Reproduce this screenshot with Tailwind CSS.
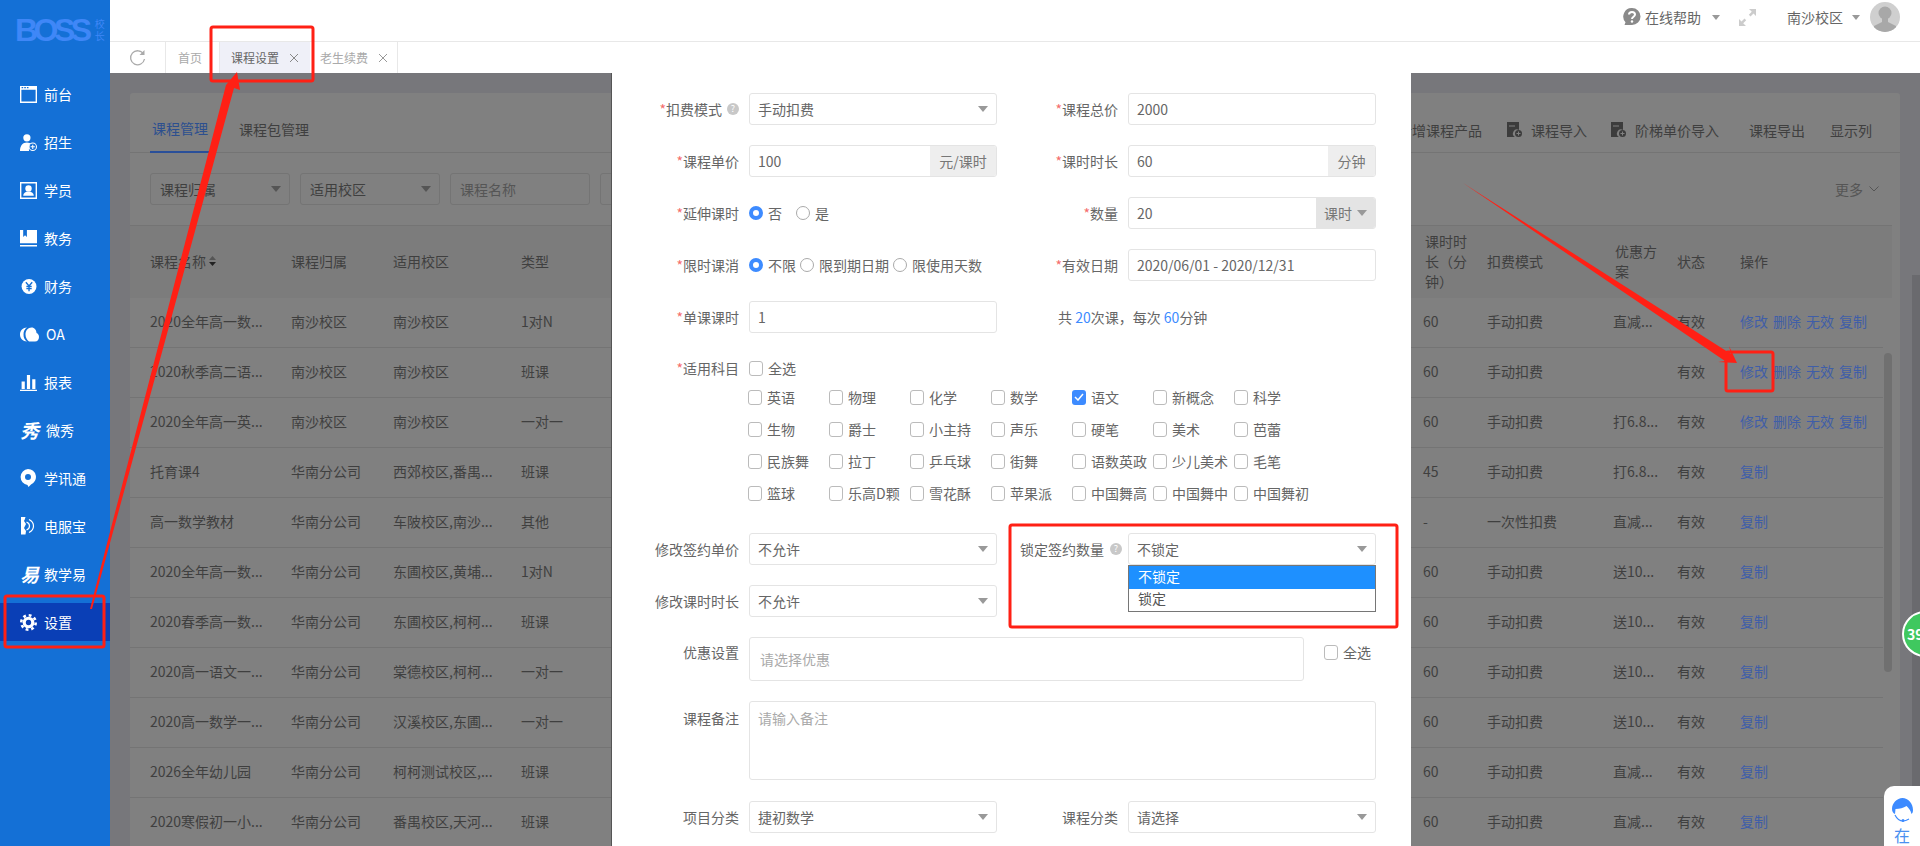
<!DOCTYPE html>
<html lang="zh-CN">
<head>
<meta charset="UTF-8">
<title>课程设置</title>
<script src="https://cdn.jsdelivr.net/npm/@tailwindcss/browser@4"></script>
</head>
<body class="relative flex h-[846px] w-[1920px] overflow-hidden bg-white text-[14px] leading-[20px] text-[#666] font-['Noto_Sans_CJK_SC',sans-serif]">

<!-- sidebar -->
<aside class="w-[110px] shrink-0 bg-[#1470d6] text-white">
  <div class="flex h-[75px] items-start pl-[15px] pt-[15px]">
    <span class="text-[32px] leading-[30px] font-bold tracking-[-4.500px] text-[#3f87f7] font-['Liberation_Sans',sans-serif]">BOSS</span>
    <span class="ml-[7px] mt-[3px] w-[10px] text-[10px] leading-[12px] text-[#3f87f7]">校长</span>
  </div>
  <nav class="flex flex-col gap-[10px]">
    <a class="flex h-[38px] items-center pl-[20px]"><span class="w-[24px]"><svg class="h-[17px] w-[17px]" viewBox="0 0 16 16"><path fill="#fff" fill-rule="evenodd" d="M0 0h16v16H0zM1.300 3.500v11.200h13.400V3.500z"/><path fill="#1470d6" d="M1.500 1h1.500v1.200H1.500zM4 1h1.500v1.200H4zM6.500 1H8v1.200H6.500z"/></svg></span>前台</a>
    <a class="flex h-[38px] items-center pl-[20px]"><span class="w-[24px]"><svg class="h-[17px] w-[17px]" viewBox="0 0 16 16"><circle cx="6.500" cy="3.600" r="3.400" fill="#fff"/><path fill="#fff" d="M0 16c0-5 2.500-8 6.500-8 2 0 3.500.8 4.500 2-2 1-3 3-2.500 6z"/><circle cx="12" cy="12" r="3.500" fill="#1470d6" stroke="#fff"/><path stroke="#fff" d="M12 10v4M10 12h4"/></svg></span>招生</a>
    <a class="flex h-[38px] items-center pl-[20px]"><span class="w-[24px]"><svg class="h-[17px] w-[17px]" viewBox="0 0 16 16"><path fill="#fff" fill-rule="evenodd" d="M0 0h16v16H0zM1.300 1.300v13.400h13.400V1.300z"/><circle cx="8" cy="6" r="3" fill="#fff"/><path fill="#fff" d="M3 13c0-2.500 2-4 5-4s5 1.500 5 4z"/></svg></span>学员</a>
    <a class="flex h-[38px] items-center pl-[20px]"><span class="w-[24px]"><svg class="h-[17px] w-[17px]" viewBox="0 0 16 16"><path fill="#fff" d="M0 0h16v12.500H0zM0 14h16v1.600H0z"/><path fill="#1470d6" d="M3 0h3.500v6.500L4.750 5 3 6.500z"/></svg></span>教务</a>
    <a class="flex h-[38px] items-center pl-[20px]"><span class="w-[24px]"><svg class="h-[17px] w-[17px]" viewBox="0 0 16 16"><circle cx="8.500" cy="8" r="7" fill="#fff"/><path fill="none" stroke="#1470d6" stroke-width="1.300" d="M5.500 4l3 3.500 3-3.500M8.500 7.500V12.500M6 8h5M6 10h5"/></svg></span>财务</a>
    <a class="flex h-[38px] items-center pl-[20px]"><span class="w-[26px]"><svg class="h-[15px] w-[19px]" viewBox="0 0 19 15"><path fill="#fff" d="M7 .5C3 .5 0 3.500 0 7.500s3 7 7 7c-2.500-1.500-3.500-4-3.500-7S4.500 2 7 .5z"/><path fill="#fff" d="M11.500 .5c3 0 5 2.500 5 5.500 1.500.5 2.500 2 2.500 4 0 2.500-1.500 4.500-4 4.500H9C7 13 5.500 10.500 5.500 7.500 5.500 3.500 8 .5 11.500 .5z"/></svg></span>OA</a>
    <a class="flex h-[38px] items-center pl-[20px]"><span class="w-[24px]"><svg class="h-[17px] w-[17px]" viewBox="0 0 16 16"><path fill="#fff" d="M1.500 7h3v7h-3zM6.500 1h3v13h-3zM11.500 5h3v9h-3zM0 14.800h16V16H0z"/></svg></span>报表</a>
    <a class="flex h-[38px] items-center pl-[20px]"><span class="w-[26px] text-[19px] leading-[20px] font-bold italic">秀</span>微秀</a>
    <a class="flex h-[38px] items-center pl-[20px]"><span class="w-[24px]"><svg class="h-[18px] w-[16px]" viewBox="0 0 16 18"><path fill="#fff" fill-rule="evenodd" d="M8 0a8 8 0 0 1 3 15.400L8.500 18l-1-2.100A8 8 0 0 1 8 0zm0 5a3 3 0 1 0 0 6 3 3 0 0 0 0-6z"/></svg></span>学讯通</a>
    <a class="flex h-[38px] items-center pl-[20px]"><span class="w-[24px]"><svg class="h-[18px] w-[16px]" viewBox="0 0 16 18"><path fill="#fff" d="M1 0h4.500C5 2 4.500 3 4 4l2 3-2 4 2 3-.5 3.500H1z"/><path fill="none" stroke="#fff" stroke-width="1.200" d="M6.500 5c2 .8 3 2.200 3 4s-1 3.200-3 4M9 2.500c3 1.500 4.500 3.800 4.500 6.500s-1.500 5-4.500 6.500"/></svg></span>电服宝</a>
    <a class="flex h-[38px] items-center pl-[20px]"><span class="w-[24px] text-[19px] leading-[20px] font-bold italic">易</span>教学易</a>
    <a class="flex h-[38px] items-center bg-[#0a3fb6] pl-[20px]"><span class="w-[24px]"><svg class="h-[17px] w-[17px]" viewBox="0 0 16 16"><circle cx="8" cy="8" r="5.500" fill="#fff"/><circle cx="8" cy="8" r="6.800" fill="none" stroke="#fff" stroke-width="2.400" stroke-dasharray="2.670 2.670"/><circle cx="8" cy="8" r="2.500" fill="#0a3fb6"/></svg></span>设置</a>
  </nav>
</aside>

<div class="flex w-[1810px] flex-col">
  <!-- top bar -->
  <header class="flex h-[42px] shrink-0 items-start justify-end border-b border-[#e8e8e8] pr-[20px] pt-[2px]">
    <div class="flex h-[30px] items-center">
      <svg class="h-[18px] w-[18px]" viewBox="0 0 18 18"><path fill="#8a8a8a" d="M9 0a8.500 8.500 0 0 1 0 17H1.500l1-2.800A8.500 8.500 0 0 1 9 0z"/><path fill="none" stroke="#fff" stroke-width="2" d="M6 6.500C6 4.800 7.300 4 9 4s3 1 3 2.500c0 2.200-3 2.200-3 4.500"/><circle cx="9" cy="13.500" r="1.200" fill="#fff"/></svg>
      <span class="ml-[4px]">在线帮助</span>
      <span class="ml-[11px] h-0 w-0 border-x-[4.500px] border-t-[5px] border-x-transparent border-t-[#999]"></span>
      <svg class="ml-[19px] h-[17px] w-[17px]" viewBox="0 0 17 17"><path fill="#ccc" d="M10 0h7v7l-2.500-2.500-3 3L9.800 5.800l3-3zM0 17v-7l2.500 2.500 3-3 1.700 1.700-3 3L7 17z"/></svg>
      <span class="ml-[31px]">南沙校区</span>
      <span class="ml-[9px] h-0 w-0 border-x-[4.500px] border-t-[5px] border-x-transparent border-t-[#999]"></span>
      <span class="ml-[10px] h-[30px] w-[30px] overflow-hidden rounded-full bg-[#cfcfcf]"><svg viewBox="0 0 30 30"><circle cx="15" cy="11" r="6.500" fill="#a8a8a8"/><path fill="#a8a8a8" d="M12 16h6v4l8 4v6H4v-6l8-4z"/></svg></span>
    </div>
  </header>

  <!-- tab strip -->
  <div class="flex h-[31px] shrink-0 items-stretch text-[12px] text-[#aaa]">
    <div class="flex w-[56px] items-center justify-end border-r border-[#e8e8e8] pr-[19px]">
      <svg class="h-[18px] w-[17px]" viewBox="0 0 17 18"><path fill="none" stroke="#aaa" stroke-width="1.300" d="M14.500 5A7 7 0 1 0 15.500 10"/><path fill="#aaa" d="M15.500 1v5h-5z"/></svg>
    </div>
    <div class="flex w-[54px] items-center justify-center border-r border-[#e8e8e8] pr-[5px]">首页</div>
    <div class="flex w-[90px] items-center bg-[#eff0f8] pl-[11px] text-[#666]">课程设置<svg class="ml-[11px] h-[8px] w-[8px]" viewBox="0 0 8 8"><path stroke="#888" d="M0 0l8 8M8 0L0 8"/></svg></div>
    <div class="flex w-[88px] items-center border-r border-[#e8e8e8] pl-[10px]">老生续费<svg class="ml-[11px] h-[8px] w-[8px]" viewBox="0 0 8 8"><path stroke="#999" d="M0 0l8 8M8 0L0 8"/></svg></div>
  </div>

  <!-- dimmed page with the dialog on top -->
  <main class="relative flex-1 overflow-hidden bg-[#77777b] text-[#3f3f3f]">
    <div class="ml-[20px] mt-[20px] w-[1770px] rounded-[3px] bg-[#808080]">
      <div class="flex h-[60px] items-center justify-between border-b border-[#747474] pl-[20px] pr-[28px]">
        <div class="flex h-[60px]">
          <span class="flex w-[60px] items-center justify-center border-b-2 border-[#2a4f99] pt-[12px] text-[#2c4f8f]">课程管理</span>
          <span class="ml-[29px] flex items-center pt-[12px]">课程包管理</span>
        </div>
        <div class="flex items-center pt-[14px]">
          <span>新增课程产品</span>
          <svg class="ml-[25px] h-[15px] w-[15px]" viewBox="0 0 15 15"><path fill="#3c3c3c" d="M0 0h12v8a4 4 0 0 0-4 7H0z"/><circle cx="11.500" cy="11.500" r="3.500" fill="#3c3c3c"/><path stroke="#808080" d="M2 4h6M9.500 11.500h4M11.500 9.500v4"/></svg>
          <span class="ml-[9px]">课程导入</span>
          <svg class="ml-[24px] h-[15px] w-[15px]" viewBox="0 0 15 15"><path fill="#3c3c3c" d="M0 0h12v8a4 4 0 0 0-4 7H0z"/><circle cx="11.500" cy="11.500" r="3.500" fill="#3c3c3c"/><path stroke="#808080" d="M2 4h6M9.500 11.500h4M11.500 9.500v4"/></svg>
          <span class="ml-[9px]">阶梯单价导入</span>
          <span class="ml-[30px]">课程导出</span>
          <span class="ml-[25px]">显示列</span>
        </div>
      </div>
      <div class="flex h-[72px] items-center justify-between pl-[20px] pr-[21px] pb-[1px]">
        <div class="flex gap-[10px]">
          <div class="flex h-[32px] w-[140px] items-center justify-between rounded-[3px] border border-[#747474] pl-[9px] pr-[8px]">课程归属<span class="h-0 w-0 border-x-[5px] border-t-[6px] border-x-transparent border-t-[#555]"></span></div>
          <div class="flex h-[32px] w-[140px] items-center justify-between rounded-[3px] border border-[#747474] pl-[9px] pr-[8px]">适用校区<span class="h-0 w-0 border-x-[5px] border-t-[6px] border-x-transparent border-t-[#555]"></span></div>
          <div class="flex h-[32px] w-[140px] items-center rounded-[3px] border border-[#747474] pl-[9px] text-[#555]">课程名称</div>
          <div class="h-[32px] w-[140px] rounded-[3px] border border-[#747474]"></div>
        </div>
        <span class="flex items-center gap-[6px] text-[#555]">更多<svg class="h-[6px] w-[10px]" viewBox="0 0 10 6"><path fill="none" stroke="#555" d="M.5.500L5 5 9.500.500"/></svg></span>
      </div>
      <!-- table -->
      <div class="w-[1762px] border-t border-[#747474] bg-[#7c7c7c]">
        <div class="grid h-[72px] w-[1753px] grid-cols-[141px_102px_128px_902px_64px_126px_64px_63px_143px] items-center pb-[2px] pl-[20px]">
          <span class="flex items-center gap-[3px]">课程名称<svg class="h-[10px] w-[7px]" viewBox="0 0 7 10"><path fill="#555" d="M3.500 0L7 4H0z"/><path fill="#222" d="M3.500 10L7 6H0z"/></svg></span>
          <span>课程归属</span><span>适用校区</span><span>类型</span>
          <span class="ml-[2px] w-[44px]">课时时长（分钟）</span><span>扣费模式</span><span class="ml-[2px] w-[44px]">优惠方案</span><span>状态</span><span>操作</span>
        </div>
      </div>
      <div id="rows" class="w-[1753px]"></div>
    </div>
    <!-- table scrollbar -->
    <div class="absolute left-[1774px] top-[280px] h-[319px] w-[8px] rounded-[4px] bg-[#707070]"></div>
    <!-- page scrollbar -->
    <div class="absolute bottom-0 right-0 top-[202px] w-[8px] bg-[#6a6a6e]"></div>

    <!-- dialog -->
    <section class="absolute bottom-0 left-[501px] top-0 w-[800px] border-l border-[#555] bg-white pt-[20px] text-[#666]">
      <div class="grid grid-cols-[137px_248px_131px_248px] gap-y-[20px]">
        <div class="flex h-[32px] items-center justify-end pr-[10px]"><b class="font-normal text-[#f56c6c]">*</b>扣费模式<span class="ml-[5px] flex h-[12px] w-[12px] items-center justify-center rounded-full bg-[#c8c8c8] text-[9px] leading-[12px] text-white">?</span></div>
        <div class="flex h-[32px] items-center justify-between rounded-[3px] border border-[#e4e4e4] pl-[8px] pr-[8px]">手动扣费<span class="h-0 w-0 border-x-[5px] border-t-[6px] border-x-transparent border-t-[#999]"></span></div>
        <div class="flex h-[32px] items-center justify-end pr-[10px]"><b class="font-normal text-[#f56c6c]">*</b>课程总价</div>
        <div class="flex h-[32px] items-center rounded-[3px] border border-[#e4e4e4] pl-[8px]">2000</div>

        <div class="flex h-[32px] items-center justify-end pr-[10px]"><b class="font-normal text-[#f56c6c]">*</b>课程单价</div>
        <div class="flex h-[32px] items-stretch overflow-hidden rounded-[3px] border border-[#e4e4e4]"><span class="flex flex-1 items-center pl-[8px]">100</span><span class="flex w-[66px] items-center justify-center bg-[#eeeeee] text-[#777]">元/课时</span></div>
        <div class="flex h-[32px] items-center justify-end pr-[10px]"><b class="font-normal text-[#f56c6c]">*</b>课时时长</div>
        <div class="flex h-[32px] items-stretch overflow-hidden rounded-[3px] border border-[#e4e4e4]"><span class="flex flex-1 items-center pl-[8px]">60</span><span class="flex w-[47px] items-center justify-center bg-[#eeeeee] text-[#777]">分钟</span></div>

        <div class="flex h-[32px] items-center justify-end pr-[10px]"><b class="font-normal text-[#f56c6c]">*</b>延伸课时</div>
        <div class="flex h-[32px] items-center">
          <span class="h-[14px] w-[14px] rounded-full border-[4px] border-[#3d8bff] bg-white"></span><span class="ml-[5px]">否</span>
          <span class="ml-[14px] h-[14px] w-[14px] rounded-full border border-[#aaa]"></span><span class="ml-[5px]">是</span>
        </div>
        <div class="flex h-[32px] items-center justify-end pr-[10px]"><b class="font-normal text-[#f56c6c]">*</b>数量</div>
        <div class="flex h-[32px] items-stretch overflow-hidden rounded-[3px] border border-[#e4e4e4]"><span class="flex flex-1 items-center pl-[8px]">20</span><span class="flex w-[59px] items-center justify-center gap-[5px] bg-[#e4e4e4] text-[#777]">课时<span class="h-0 w-0 border-x-[5px] border-t-[6px] border-x-transparent border-t-[#999]"></span></span></div>

        <div class="flex h-[32px] items-center justify-end pr-[10px]"><b class="font-normal text-[#f56c6c]">*</b>限时课消</div>
        <div class="flex h-[32px] items-center whitespace-nowrap">
          <span class="h-[14px] w-[14px] rounded-full border-[4px] border-[#3d8bff] bg-white"></span><span class="ml-[5px]">不限</span>
          <span class="ml-[4px] h-[14px] w-[14px] rounded-full border border-[#aaa]"></span><span class="ml-[5px]">限到期日期</span>
          <span class="ml-[4px] h-[14px] w-[14px] rounded-full border border-[#aaa]"></span><span class="ml-[5px]">限使用天数</span>
        </div>
        <div class="flex h-[32px] items-center justify-end pr-[10px]"><b class="font-normal text-[#f56c6c]">*</b>有效日期</div>
        <div class="flex h-[32px] items-center rounded-[3px] border border-[#e4e4e4] pl-[8px]">2020/06/01 - 2020/12/31</div>

        <div class="flex h-[32px] items-center justify-end pr-[10px]"><b class="font-normal text-[#f56c6c]">*</b>单课课时</div>
        <div class="flex h-[32px] items-center rounded-[3px] border border-[#e4e4e4] pl-[8px]">1</div>
        <div class="col-span-2 flex h-[32px] items-center pl-[61px]">共&nbsp;<span class="text-[#3d8bff]">20</span>次课，每次&nbsp;<span class="text-[#3d8bff]">60</span>分钟</div>
      </div>

      <!-- subjects -->
      <div class="mt-[22px] flex h-[26px] items-start">
        <div class="w-[137px] pr-[10px] pt-[3px] text-right"><b class="font-normal text-[#f56c6c]">*</b>适用科目</div>
        <label class="flex items-center pt-[3px]"><span class="h-[15px] w-[14px] rounded-[3px] border border-[#bbb]"></span><span class="ml-[5px]">全选</span></label>
      </div>
      <div id="subjects" class="ml-[136px] grid grid-cols-[repeat(7,81px)]"></div>

      <!-- signing rules -->
      <div class="mt-[24px] grid grid-cols-[137px_248px_131px_248px] gap-y-[20px]">
        <div class="flex h-[32px] items-center justify-end pr-[10px]">修改签约单价</div>
        <div class="flex h-[32px] items-center justify-between rounded-[3px] border border-[#e4e4e4] px-[8px]">不允许<span class="h-0 w-0 border-x-[5px] border-t-[6px] border-x-transparent border-t-[#999]"></span></div>
        <div class="flex h-[32px] items-center justify-end pr-[6px]">锁定签约数量<span class="ml-[6px] flex h-[12px] w-[12px] items-center justify-center rounded-full bg-[#c8c8c8] text-[9px] leading-[12px] text-white">?</span></div>
        <div class="relative flex h-[32px] items-center justify-between rounded-[3px] border border-[#e4e4e4] px-[8px]">不锁定<span class="h-0 w-0 border-x-[5px] border-t-[6px] border-x-transparent border-t-[#999]"></span>
          <div class="absolute left-[-1px] right-[-1px] top-[31px] border border-[#767676] bg-white text-[#555]">
            <div class="flex h-[23px] items-center bg-[#1e90ff] pb-[4px] pl-[9px] text-white">不锁定</div>
            <div class="flex h-[22px] items-center pb-[4px] pl-[9px]">锁定</div>
          </div>
        </div>
        <div class="flex h-[32px] items-center justify-end pr-[10px]">修改课时时长</div>
        <div class="flex h-[32px] items-center justify-between rounded-[3px] border border-[#e4e4e4] px-[8px]">不允许<span class="h-0 w-0 border-x-[5px] border-t-[6px] border-x-transparent border-t-[#999]"></span></div>
      </div>

      <div class="mt-[20px] flex items-start">
        <div class="w-[137px] pr-[10px] pt-[5px] text-right">优惠设置</div>
        <div class="flex h-[44px] w-[555px] items-center rounded-[3px] border border-[#e4e4e4] pl-[10px] text-[#aaa]">请选择优惠</div>
        <label class="ml-[20px] flex items-center pt-[5px]"><span class="h-[15px] w-[14px] rounded-[3px] border border-[#bbb]"></span><span class="ml-[5px]">全选</span></label>
      </div>

      <div class="mt-[20px] flex items-start">
        <div class="w-[137px] pr-[10px] pt-[7px] text-right">课程备注</div>
        <div class="h-[79px] w-[627px] rounded-[3px] border border-[#e4e4e4] pl-[8px] pt-[6px] text-[#aaa]">请输入备注</div>
      </div>

      <div class="mt-[21px] grid grid-cols-[137px_248px_131px_248px]">
        <div class="flex h-[32px] items-center justify-end pr-[10px]">项目分类</div>
        <div class="flex h-[32px] items-center justify-between rounded-[3px] border border-[#e4e4e4] px-[8px]">捷初数学<span class="h-0 w-0 border-x-[5px] border-t-[6px] border-x-transparent border-t-[#999]"></span></div>
        <div class="flex h-[32px] items-center justify-end pr-[10px]">课程分类</div>
        <div class="flex h-[32px] items-center justify-between rounded-[3px] border border-[#e4e4e4] px-[8px]">请选择<span class="h-0 w-0 border-x-[5px] border-t-[6px] border-x-transparent border-t-[#999]"></span></div>
      </div>
    </section>
  </main>
</div>

<!-- green float ball -->
<div class="absolute left-[1902px] top-[611px] flex h-[46px] w-[46px] items-center justify-start rounded-full border-2 border-white bg-[#3fc85f] pl-[3px] text-[14px] font-bold text-white">39</div>

<!-- online service widget -->
<div class="absolute bottom-0 left-[1884px] top-[786px] flex w-[36px] flex-col items-center overflow-hidden rounded-tl-[10px] bg-white pt-[12px] text-[16px] leading-[18px] text-[#4a90f0]">
  <svg class="h-[24px] w-[23px] shrink-0" viewBox="0 0 23 24"><path fill="#3d8bff" d="M11.500 0C17 0 22 5 22 12c0 2-.5 3-1.500 4-1-4-3-6-5-8-3 2-7 3-11 3l-.5 5C2 15 1 13.500 1 11 1 5 6 0 11.500 0z"/><path fill="none" stroke="#3d8bff" stroke-width="1.200" d="M4 17c2 4 5 6 8 6 2 0 4-.8 6-2"/><circle cx="12" cy="22.500" r="1.500" fill="#3d8bff"/></svg>
  <span class="mt-[4px] shrink-0">在</span>
  <span class="shrink-0">线</span>
</div>

<!-- red annotations drawn on the screenshot -->
<svg class="pointer-events-none absolute left-0 top-0 h-[846px] w-[1920px]" viewBox="0 0 1920 846">
  <g fill="none" stroke="#ff2015" stroke-width="3">
    <rect x="211" y="27" width="102" height="54" rx="2"/>
    <rect x="5" y="596" width="99" height="51" rx="2"/>
    <rect x="1726" y="352" width="47" height="39" rx="2"/>
    <rect x="1010" y="525" width="387" height="102" rx="2"/>
  </g>
  <polygon fill="#ff2015" points="237,72 240,90 234,88 92,609 90,609 226,85"/>
  <polygon fill="#ff2015" points="1463,183 1731,354 1729,346 1737,363 1718,362 1725,361"/>
</svg>

<script>
const ops = `<span class="flex gap-[5px] text-[#3f5ea8]"><a>修改</a><a>删除</a><a>无效</a><a>复制</a></span>`;
const copyOnly = `<span class="text-[#3f5ea8]">复制</span>`;
const rows = [
  ['2020全年高一数...', '南沙校区', '南沙校区', '1对N', '60', '手动扣费', '直减...', ops],
  ['2020秋季高二语...', '南沙校区', '南沙校区', '班课', '60', '手动扣费', '', ops],
  ['2020全年高一英...', '南沙校区', '南沙校区', '一对一', '60', '手动扣费', '打6.8...', ops],
  ['托育课4', '华南分公司', '西郊校区,番禺...', '班课', '45', '手动扣费', '打6.8...', copyOnly],
  ['高一数学教材', '华南分公司', '车陂校区,南沙...', '其他', '-', '一次性扣费', '直减...', copyOnly],
  ['2020全年高一数...', '华南分公司', '东圃校区,黄埔...', '1对N', '60', '手动扣费', '送10...', copyOnly],
  ['2020春季高一数...', '华南分公司', '东圃校区,柯柯...', '班课', '60', '手动扣费', '送10...', copyOnly],
  ['2020高一语文一...', '华南分公司', '棠德校区,柯柯...', '一对一', '60', '手动扣费', '送10...', copyOnly],
  ['2020高一数学一...', '华南分公司', '汉溪校区,东圃...', '一对一', '60', '手动扣费', '送10...', copyOnly],
  ['2026全年幼儿园', '华南分公司', '柯柯测试校区,...', '班课', '60', '手动扣费', '直减...', copyOnly],
  ['2020寒假初一小...', '华南分公司', '番禺校区,天河...', '班课', '60', '手动扣费', '直减...', copyOnly],
];
document.getElementById('rows').innerHTML = rows.map(r => `
  <div class="grid h-[50px] grid-cols-[141px_102px_128px_902px_64px_126px_64px_63px_143px] items-center border-b border-[#747474] pb-[3px] pl-[20px]">
    <span>${r[0]}</span><span>${r[1]}</span><span>${r[2]}</span><span>${r[3]}</span>
    <span>${r[4]}</span><span>${r[5]}</span><span>${r[6]}</span><span>有效</span>${r[7]}
  </div>`).join('');

const subjects = ['英语','物理','化学','数学','语文','新概念','科学','生物','爵士','小主持','声乐','硬笔','美术','芭蕾','民族舞','拉丁','乒乓球','街舞','语数英政','少儿美术','毛笔','篮球','乐高D颗','雪花酥','苹果派','中国舞高','中国舞中','中国舞初'];
document.getElementById('subjects').innerHTML = subjects.map(s => s === '语文'
  ? `<label class="flex h-[32px] items-center whitespace-nowrap"><span class="flex h-[15px] w-[14px] items-center justify-center rounded-[3px] bg-[#3d8bff]"><svg class="h-[8px] w-[10px]" viewBox="0 0 10 8"><path fill="none" stroke="#fff" stroke-width="1.500" d="M1 4l3 3 5-6"/></svg></span><span class="ml-[5px]">${s}</span></label>`
  : `<label class="flex h-[32px] items-center whitespace-nowrap"><span class="h-[15px] w-[14px] rounded-[3px] border border-[#bbb]"></span><span class="ml-[5px]">${s}</span></label>`).join('');
</script>
</body>
</html>
